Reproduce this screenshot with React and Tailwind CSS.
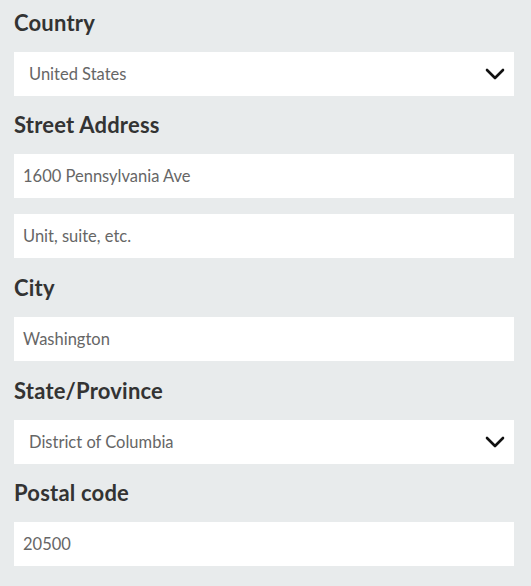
const FONT = { fontFamily: 'Lato, "Noto Sans", sans-serif' }

function Chevron() {
  return (
    <svg width="20" height="12" viewBox="0 0 20 12" fill="none" className="shrink-0">
      <path d="M2 2 L10 10 L18 2" stroke="#111" strokeWidth="2.6" strokeLinecap="round" strokeLinejoin="round" />
    </svg>
  )
}

function Label({ children }) {
  return <div className="text-[22px] leading-[28px] font-bold tracking-[0.2px] text-[#333] mb-[15px]">{children}</div>
}

function SelectBox({ value }) {
  return (
    <div className="h-[44px] bg-white flex items-center justify-between pl-[15px] pr-[9px] text-[16.5px] text-[#666]">
      <span>{value}</span>
      <Chevron />
    </div>
  )
}

function TextBox({ value }) {
  return (
    <div className="h-[44px] bg-white flex items-center px-[9px] text-[16.5px] text-[#666]">
      {value}
    </div>
  )
}

export default function App() {
  return (
    <div className="w-[531px] h-[586px] bg-[#e8ebec] pl-[14px] pt-[9px] pr-[17px]" style={FONT}>
      <Label>Country</Label>
      <SelectBox value="United States" />

      <div className="mt-[15px]">
        <Label>Street Address</Label>
        <div className="flex flex-col gap-[16px]">
          <TextBox value="1600 Pennsylvania Ave" />
          <TextBox value="Unit, suite, etc." />
        </div>
      </div>

      <div className="mt-[16px]">
        <Label>City</Label>
        <TextBox value="Washington" />
      </div>

      <div className="mt-[16px]">
        <Label>State/Province</Label>
        <SelectBox value="District of Columbia" />
      </div>

      <div className="mt-[15px]">
        <Label>Postal code</Label>
        <TextBox value="20500" />
      </div>
    </div>
  )
}
